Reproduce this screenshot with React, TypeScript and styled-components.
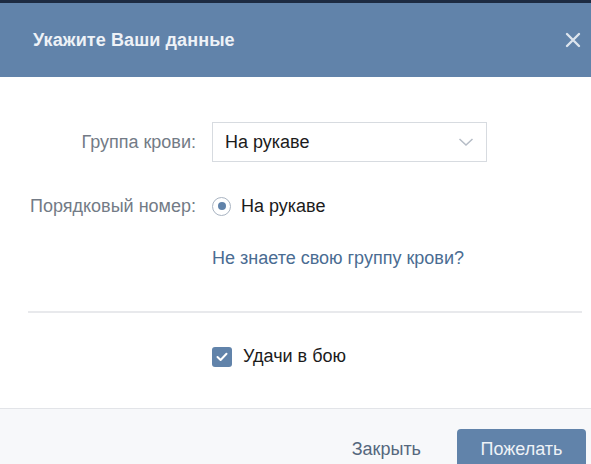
import React, { useState } from 'react';
import styled, { createGlobalStyle } from 'styled-components';

const GlobalStyle = createGlobalStyle`
  html, body {
    margin: 0;
    padding: 0;
    background: #ffffff;
  }
  body {
    font-family: "Liberation Sans", Arial, sans-serif;
    width: 591px;
    height: 464px;
    overflow: hidden;
  }
`;

const Modal = styled.div`
  display: flex;
  flex-direction: column;
  width: 591px;
  height: 464px;
  overflow: hidden;
  background: #ffffff;
`;

const TopStrip = styled.div`
  height: 3px;
  background: #1d2b42;
`;

const Header = styled.div`
  height: 74px;
  display: flex;
  align-items: center;
  justify-content: space-between;
  padding: 0 8px 0 33px;
  background: #6183aa;
`;

const Title = styled.h2`
  margin: 0;
  font-size: 18px;
  font-weight: 700;
  color: #eef2f7;
  letter-spacing: 0.1px;
`;

const CloseButton = styled.button`
  width: 20px;
  height: 20px;
  padding: 0;
  border: 0;
  background: none;
  display: flex;
  align-items: center;
  justify-content: center;
  cursor: pointer;
`;

const Body = styled.div`
  flex: 1;
  display: flex;
  flex-direction: column;
  padding: 45px 0 0;
`;

const FormRow = styled.div<{ $top: number; $height: number }>`
  display: grid;
  grid-template-columns: 196px 1fr;
  column-gap: 16px;
  align-items: center;
  height: ${(p) => p.$height}px;
  margin-top: ${(p) => p.$top}px;
`;

const Label = styled.div`
  text-align: right;
  font-size: 18px;
  color: #737b86;
`;

const Select = styled.div`
  width: 275px;
  height: 40px;
  box-sizing: border-box;
  border: 1px solid #d7dbe0;
  display: flex;
  align-items: center;
  justify-content: space-between;
  padding: 0 12px 0 12px;
  font-size: 18px;
  color: #1b1b1b;
`;

const Choice = styled.label`
  display: flex;
  align-items: center;
  gap: 10px;
  font-size: 18px;
  color: #1b1b1b;
  cursor: pointer;
`;

const Radio = styled.span`
  width: 19px;
  height: 19px;
  box-sizing: border-box;
  border-radius: 50%;
  border: 1.5px solid #a9b4c2;
  display: flex;
  align-items: center;
  justify-content: center;

  &::after {
    content: '';
    width: 8px;
    height: 8px;
    border-radius: 50%;
    background: #6183aa;
  }
`;

const Checkbox = styled.span<{ $checked: boolean }>`
  width: 20px;
  height: 20px;
  border-radius: 3px;
  margin-right: 1px;
  background: ${(p) => (p.$checked ? '#6183aa' : '#ffffff')};
  border: ${(p) => (p.$checked ? '0' : '1px solid #a9b4c2')};
  display: flex;
  align-items: center;
  justify-content: center;
`;

const Link = styled.a`
  font-size: 18px;
  color: #4a6c92;
  text-decoration: none;
  cursor: pointer;
`;

const Divider = styled.hr`
  margin: 43px 9px 0 28px;
  border: 0;
  height: 2px;
  background: #e8e9ec;
`;

const Footer = styled.div`
  height: 56px;
  box-sizing: border-box;
  border-top: 1px solid #e2e4e8;
  background: #f7f8fa;
  display: flex;
  justify-content: flex-end;
  align-items: flex-start;
  padding: 20px 5px 0 0;
`;

const FooterButton = styled.button<{ $primary?: boolean }>`
  height: 40px;
  border: 0;
  border-radius: 4px;
  font-family: inherit;
  font-size: 18px;
  cursor: pointer;
  padding: ${(p) => (p.$primary ? '0' : '0 18px')};
  width: ${(p) => (p.$primary ? '129px' : 'auto')};
  margin-right: ${(p) => (p.$primary ? '0' : '18px')};
  background: ${(p) => (p.$primary ? '#6183aa' : 'transparent')};
  color: ${(p) => (p.$primary ? '#eef2f7' : '#55677d')};
`;

const App = () => {
  const [lucky, setLucky] = useState(true);

  return (
    <>
      <GlobalStyle />
      <Modal>
        <TopStrip />
        <Header>
          <Title>Укажите Ваши данные</Title>
          <CloseButton aria-label="Закрыть">
            <svg width="16" height="16" viewBox="0 0 16 16">
              <path d="M2 2 L14 14 M14 2 L2 14" stroke="#dde5ee" strokeWidth="2.4" strokeLinecap="round" />
            </svg>
          </CloseButton>
        </Header>
        <Body>
          <FormRow $top={0} $height={40}>
            <Label>Группа крови:</Label>
            <Select>
              <span>На рукаве</span>
              <svg width="16" height="10" viewBox="0 0 16 10">
                <path d="M1.5 2 L8 8 L14.5 2" fill="none" stroke="#b5bcc6" strokeWidth="1.5" />
              </svg>
            </Select>
          </FormRow>
          <FormRow $top={32} $height={24}>
            <Label>Порядковый номер:</Label>
            <Choice>
              <Radio />
              На рукаве
            </Choice>
          </FormRow>
          <FormRow $top={30} $height={20}>
            <span />
            <Link>Не знаете свою группу крови?</Link>
          </FormRow>
          <Divider />
          <FormRow $top={33} $height={20}>
            <span />
            <Choice onClick={() => setLucky(!lucky)}>
              <Checkbox $checked={lucky}>
                {lucky && (
                  <svg width="12" height="10" viewBox="0 0 12 10">
                    <path d="M1.5 5 L4.6 8 L10.5 1.8" fill="none" stroke="#ffffff" strokeWidth="2" strokeLinecap="round" strokeLinejoin="round" />
                  </svg>
                )}
              </Checkbox>
              Удачи в бою
            </Choice>
          </FormRow>
        </Body>
        <Footer>
          <FooterButton>Закрыть</FooterButton>
          <FooterButton $primary>Пожелать</FooterButton>
        </Footer>
      </Modal>
    </>
  );
};

export default App;
